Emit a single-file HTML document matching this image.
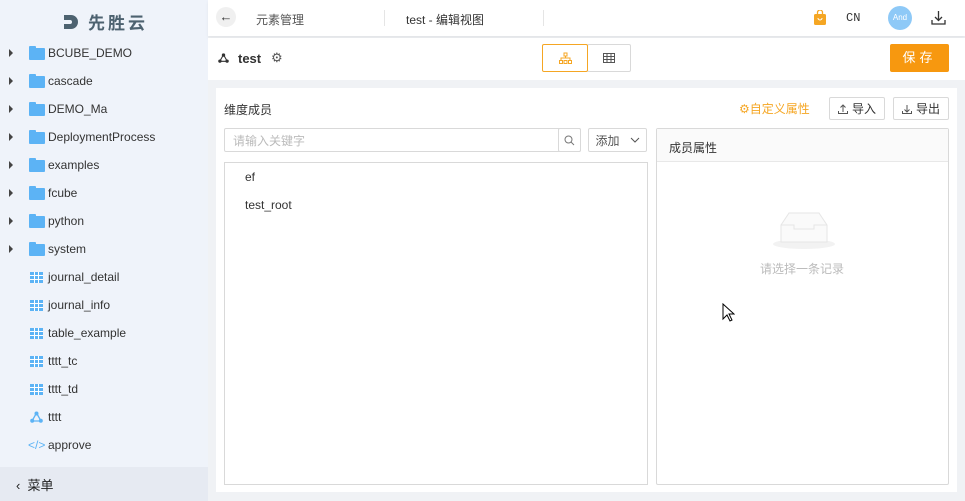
<!DOCTYPE html>
<html><head><meta charset="utf-8"><style>
*{box-sizing:border-box;margin:0;padding:0}
body{width:965px;height:501px;overflow:hidden;font-family:"Liberation Sans","Noto Sans CJK SC",sans-serif;font-size:12px;color:#333;background:#f0f2f5;position:relative}
.abs{position:absolute}
#side{left:0;top:0;width:208px;height:501px;background:#eff3fa}
.row{position:absolute;left:0;height:28px;width:208px;display:flex;align-items:center;font-size:12px;color:#333}
.arr{position:absolute;left:9px;width:0;height:0;border-left:4px solid #444;border-top:4px solid transparent;border-bottom:4px solid transparent}
.fold{position:absolute;left:29px;width:16px;height:12px;background:#5cb3f5;border-radius:1px;margin-top:2px}
.fold:before{content:"";position:absolute;left:0;top:-2px;width:7px;height:3px;background:#5cb3f5;border-radius:1px 1px 0 0}
.tbl{position:absolute;left:30px;width:13px;height:11px;background:
linear-gradient(#fff,#fff) 0 3px/100% 1px no-repeat,linear-gradient(#fff,#fff) 0 7px/100% 1px no-repeat,
linear-gradient(#fff,#fff) 4px 0/1px 100% no-repeat,linear-gradient(#fff,#fff) 8px 0/1px 100% no-repeat,#5cb3f5}
.lbl{position:absolute;left:48px}
.btn{position:absolute;border:1px solid #d9d9d9;background:#fff;border-radius:2px;display:flex;align-items:center;justify-content:center;color:#333}
</style></head><body>
<div id="side" class="abs">
 <div class="abs" style="left:62px;top:9px;font-size:17px;font-weight:bold;color:#4d6270;letter-spacing:3px;display:flex;align-items:center">
  <svg width="18" height="18" viewBox="0 0 18 18" style="margin-right:8px"><path d="M2 2h7a7 7 0 0 1 0 14H2v-5h6a2 2 0 0 0 0-4H2z" fill="#4d6270"/></svg>先胜云</div>
 <div class="row" style="top:39px"><span class="arr"></span><span class="fold"></span><span class="lbl">BCUBE_DEMO</span></div>
 <div class="row" style="top:67px"><span class="arr"></span><span class="fold"></span><span class="lbl">cascade</span></div>
 <div class="row" style="top:95px"><span class="arr"></span><span class="fold"></span><span class="lbl">DEMO_Ma</span></div>
 <div class="row" style="top:123px"><span class="arr"></span><span class="fold"></span><span class="lbl">DeploymentProcess</span></div>
 <div class="row" style="top:151px"><span class="arr"></span><span class="fold"></span><span class="lbl">examples</span></div>
 <div class="row" style="top:179px"><span class="arr"></span><span class="fold"></span><span class="lbl">fcube</span></div>
 <div class="row" style="top:207px"><span class="arr"></span><span class="fold"></span><span class="lbl">python</span></div>
 <div class="row" style="top:235px"><span class="arr"></span><span class="fold"></span><span class="lbl">system</span></div>
 <div class="row" style="top:263px"><span class="tbl"></span><span class="lbl">journal_detail</span></div>
 <div class="row" style="top:291px"><span class="tbl"></span><span class="lbl">journal_info</span></div>
 <div class="row" style="top:319px"><span class="tbl"></span><span class="lbl">table_example</span></div>
 <div class="row" style="top:347px"><span class="tbl"></span><span class="lbl">tttt_tc</span></div>
 <div class="row" style="top:375px"><span class="tbl"></span><span class="lbl">tttt_td</span></div>
 <div class="row" style="top:403px"><svg class="abs" style="left:30px" width="13" height="12" viewBox="0 0 13 12"><path d="M6.5 2L2 10h9z" stroke="#5cb3f5" fill="none" stroke-width="1.3"/><circle cx="6.5" cy="2.5" r="2" fill="#5cb3f5"/><circle cx="2.2" cy="9.8" r="2" fill="#5cb3f5"/><circle cx="10.8" cy="9.8" r="2" fill="#5cb3f5"/></svg><span class="lbl">tttt</span></div>
 <div class="row" style="top:431px"><span class="abs" style="left:28px;color:#5cb3f5;font-size:12px">&lt;/&gt;</span><span class="lbl">approve</span></div>
 <div class="abs" style="left:0;top:467px;width:208px;height:34px;background:#e6eaf2;display:flex;align-items:center;padding-left:16px;font-size:13px;color:#222">‹&nbsp;&nbsp;菜单</div>
</div>
<div class="abs" style="left:208px;top:0;width:757px;height:36px;background:#fff;box-shadow:0 2px 3px rgba(0,0,0,.06)">
 <div class="abs" style="left:8px;top:7px;width:20px;height:20px;border-radius:50%;background:#f0f0f0;text-align:center;line-height:19px;font-size:13px;color:#333">←</div>
 <div class="abs" style="left:48px;top:11px;font-size:12px;color:#555">元素管理</div>
 <div class="abs" style="left:176px;top:10px;width:1px;height:16px;background:#e5e5e5"></div>
 <div class="abs" style="left:198px;top:11px;font-size:12px;color:#333">test - 编辑视图</div>
 <div class="abs" style="left:335px;top:10px;width:1px;height:16px;background:#e5e5e5"></div>
 <svg class="abs" style="left:606px;top:10px" width="12" height="15" viewBox="0 0 12 15"><path d="M3.5 4V2.5a2.5 2.5 0 0 1 5 0V4" stroke="#f5a623" fill="none" stroke-width="1.3"/><rect x="0" y="4" width="12" height="11" rx="1.5" fill="#f5a623"/><path d="M4 8a2 2 0 0 0 4 0" stroke="#fff" fill="none"/></svg>
 <div class="abs" style="left:638px;top:11px;font-family:'Liberation Mono',monospace;font-size:12px">CN</div>
 <div class="abs" style="left:680px;top:6px;width:24px;height:24px;border-radius:50%;background:#8ec9f7;color:#fff;font-size:8px;text-align:center;line-height:24px">And</div>
 <svg class="abs" style="left:723px;top:10px" width="15" height="15" viewBox="0 0 15 15"><path d="M7.5 1v9M4 7l3.5 3.5L11 7M1 10v4h13v-4" stroke="#333" fill="none" stroke-width="1.3"/></svg>
</div>
<div class="abs" style="left:208px;top:38px;width:757px;height:42px;background:#fff">
 <svg class="abs" style="left:10px;top:15px" width="11" height="10" viewBox="0 0 13 12"><path d="M6.5 2L2 10h9z" stroke="#333" fill="none" stroke-width="1.3"/><circle cx="6.5" cy="2.5" r="2" fill="#333"/><circle cx="2.2" cy="9.8" r="2" fill="#333"/><circle cx="10.8" cy="9.8" r="2" fill="#333"/></svg>
 <div class="abs" style="left:30px;top:13px;font-size:13px;font-weight:bold;color:#333">test</div>
 <div class="abs" style="left:63px;top:12px;font-size:13px;color:#555">⚙</div>
 <div class="btn" style="left:334px;top:6px;width:46px;height:28px;border-color:#f5a623;z-index:2">
  <svg width="13" height="12" viewBox="0 0 13 12"><path d="M5 1h3v3H5zM6.5 4v2M2 8V6h9v2" stroke="#f5a623" fill="none"/><rect x="0.5" y="8.5" width="3" height="3" fill="none" stroke="#f5a623"/><rect x="5" y="8.5" width="3" height="3" fill="none" stroke="#f5a623"/><rect x="9.5" y="8.5" width="3" height="3" fill="none" stroke="#f5a623"/></svg></div>
 <div class="btn" style="left:379px;top:6px;width:44px;height:28px">
  <svg width="12" height="10" viewBox="0 0 12 10"><path d="M.5.5h11v9H.5zM.5 3.5h11M.5 6.5h11M4 .5v9M8 .5v9" stroke="#555" fill="none"/></svg></div>
 <div class="abs" style="left:682px;top:6px;width:59px;height:28px;background:#f7980f;border-radius:2px;color:#fff;font-size:13px;text-align:center;line-height:28px;letter-spacing:4px">保存</div>
</div>
<div class="abs" style="left:216px;top:88px;width:741px;height:404px;background:#fff">
 <div class="abs" style="left:8px;top:13px;font-size:12px;color:#333">维度成员</div>
 <div class="abs" style="left:523px;top:12px;font-size:12px;color:#f5a623">⚙自定义属性</div>
 <div class="btn" style="left:613px;top:9px;width:56px;height:23px;font-size:12px"><svg width="10" height="10" viewBox="0 0 10 10" style="margin-right:4px"><path d="M5 8V1M2.5 3.5L5 1l2.5 2.5M.5 7v2.5h9V7" stroke="#555" fill="none"/></svg>导入</div>
 <div class="btn" style="left:677px;top:9px;width:56px;height:23px;font-size:12px"><svg width="10" height="10" viewBox="0 0 10 10" style="margin-right:4px"><path d="M5 1v7M2.5 5.5L5 8l2.5-2.5M.5 7v2.5h9V7" stroke="#555" fill="none"/></svg>导出</div>
 <div class="btn" style="left:8px;top:40px;width:357px;height:24px;justify-content:flex-start;padding-left:8px;color:#bbb">请输入关键字</div>
 <div class="btn" style="left:342px;top:40px;width:23px;height:24px"><svg width="11" height="11" viewBox="0 0 11 11"><circle cx="4.5" cy="4.5" r="3.5" stroke="#777" fill="none"/><path d="M7 7l3 3" stroke="#777"/></svg></div>
 <div class="btn" style="left:372px;top:40px;width:59px;height:24px;color:#555">添加&nbsp;&nbsp;&nbsp;<svg width="10" height="6" viewBox="0 0 10 6"><path d="M1 1l4 4 4-4" stroke="#555" fill="none"/></svg></div>
 <div class="abs" style="left:8px;top:74px;width:424px;height:323px;border:1px solid #d9d9d9">
  <div class="abs" style="left:20px;top:7px">ef</div>
  <div class="abs" style="left:20px;top:35px">test_root</div>
 </div>
 <div class="abs" style="left:440px;top:40px;width:293px;height:357px;border:1px solid #d9d9d9;border-radius:2px">
  <div style="height:33px;background:#fafafa;border-bottom:1px solid #e8e8e8;padding:10px 12px;font-size:12px;color:#333">成员属性</div>
  <svg class="abs" style="left:114px;top:80px" width="66" height="42" viewBox="0 0 66 42"><ellipse cx="33" cy="35" rx="31" ry="5" fill="#f2f2f2"/><path d="M10 16L18 4h30l8 12v17H10z" fill="#fafafa" stroke="#e6e6e6"/><path d="M10 16h13v4h20v-4h13" fill="none" stroke="#e6e6e6"/></svg>
  <div class="abs" style="left:103px;top:131px;color:#bbb;font-size:12px">请选择一条记录</div>
 </div>
</div>
<svg class="abs" style="left:722px;top:303px" width="13" height="20" viewBox="0 0 13 20"><path d="M1 1v15l4-4 3 6 2-1-3-6h5z" fill="#fff" stroke="#000"/></svg>
</body></html>
